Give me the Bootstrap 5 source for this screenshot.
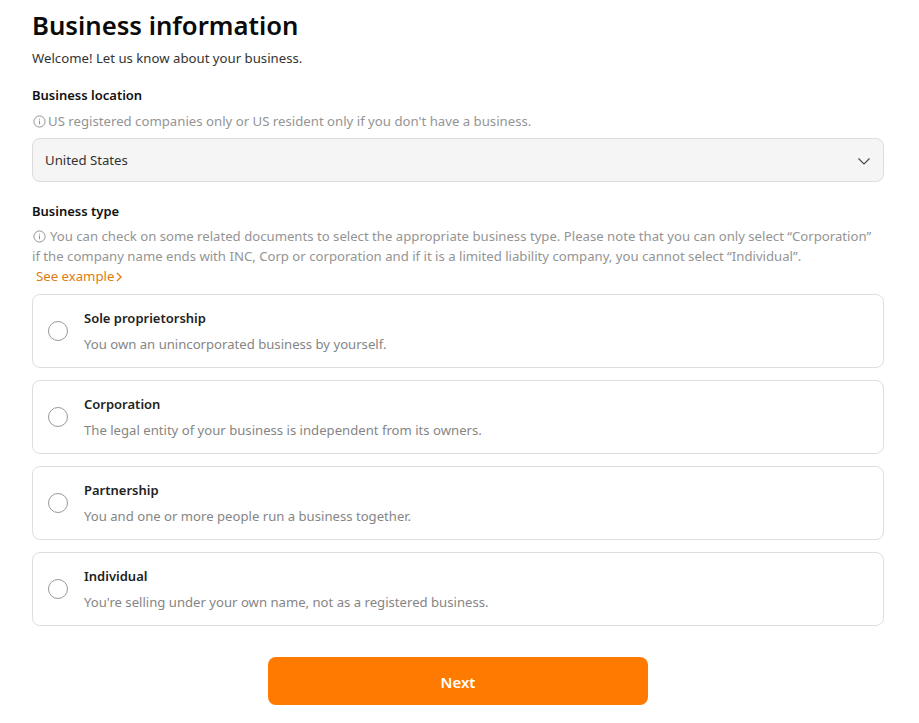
<!DOCTYPE html>
<html lang="en">
<head>
<meta charset="utf-8">
<title>Business information</title>
<link href="https://cdn.jsdelivr.net/npm/bootstrap@5.3.0/dist/css/bootstrap.min.css" rel="stylesheet">
<style>
html,body{height:723px;overflow:hidden;background:#fff;}
body{font-family:"Noto Sans","Open Sans",sans-serif;color:#111;font-size:13.2px;}
.pg{padding:0 35px 0 32px;}
.ttl{font-size:25.7px;font-weight:600;line-height:38px;margin:7px 0 0;color:#0a0a0a;}
.sub{font-size:13.2px;line-height:18px;margin:4px 0 0;color:#333;}
.lbl{font-size:13px;font-weight:600;line-height:18px;color:#111;}
.lbl1{margin-top:19px;}
.lbl2{margin-top:20px;}
.hint{font-size:13.2px;line-height:20px;color:#949494;}
.hint1{margin-top:7px;}
.hint2{margin-top:6px;font-size:13.17px;padding-right:4px;}
.ico{width:13px;height:13px;vertical-align:-2px;margin-left:1px;}
.ico1{margin-right:2px;}
.ico2{margin-right:4px;}
.sel{height:44px;background:#f5f5f5;border:1px solid #dcdcdc;border-radius:8px;padding:1px 12px 0;color:#333;font-size:13.2px;margin-top:7px;}
.opts{gap:12px;margin-top:8px;}
.opt{height:74px;border:1px solid #dedede;border-radius:8px;padding:0 15px;gap:16px;}
.rad{width:20px;height:20px;border:1.5px solid #999;border-radius:50%;flex:none;margin-top:-1px;}
.optt{font-size:13px;font-weight:600;line-height:18px;color:#222;}
.optd{font-size:13.13px;line-height:18px;color:#858585;margin-top:8px;}
.seeex{color:#e07b10;font-size:13.2px;line-height:20px;padding-left:4px;}
.seeex svg{margin-left:1px;}
.nxtw{margin-top:31px;}
.nxt{width:380px;height:48px;background:#ff7a00;border:0;border-radius:8px;color:#fff;font-weight:600;font-size:15px;padding:8px 12px 6px;}
</style>
</head>
<body>
<div class="pg">
<h1 class="ttl">Business information</h1>
<p class="sub">Welcome! Let us know about your business.</p>
<div class="lbl lbl1">Business location</div>
<div class="hint hint1"><svg class="ico ico1" viewBox="0 0 14 14" fill="none" stroke="#8a8a8a"><circle cx="7" cy="7" r="6"/><path d="M7 6v4M7 4v1"/></svg>US registered companies only or US resident only if you don't have a business.</div>
<div class="sel d-flex align-items-center justify-content-between"><span>United States</span><svg width="14" height="14" viewBox="0 0 14 14" fill="none" stroke="#444" stroke-width="1.1"><path d="M1.5 4.5 7 10l5.5-5.5"/></svg></div>
<div class="lbl lbl2">Business type</div>
<div class="hint hint2"><svg class="ico ico2" viewBox="0 0 14 14" fill="none" stroke="#8a8a8a"><circle cx="7" cy="7" r="6"/><path d="M7 6v4M7 4v1"/></svg>You can check on some related documents to select the appropriate business type. Please note that you can only select “Corporation” if the company name ends with INC, Corp or corporation and if it is a limited liability company, you cannot select “Individual”.</div>
<div class="seeex">See example<svg width="8" height="10" viewBox="0 0 8 10" fill="none" stroke="#e07b10" stroke-width="1.3"><path d="M2 1l4 4-4 4"/></svg></div>
<div class="opts d-flex flex-column">
<div class="opt d-flex align-items-center"><span class="rad"></span><div><div class="optt">Sole proprietorship</div><div class="optd">You own an unincorporated business by yourself.</div></div></div>
<div class="opt d-flex align-items-center"><span class="rad"></span><div><div class="optt">Corporation</div><div class="optd">The legal entity of your business is independent from its owners.</div></div></div>
<div class="opt d-flex align-items-center"><span class="rad"></span><div><div class="optt">Partnership</div><div class="optd">You and one or more people run a business together.</div></div></div>
<div class="opt d-flex align-items-center"><span class="rad"></span><div><div class="optt">Individual</div><div class="optd">You're selling under your own name, not as a registered business.</div></div></div>
</div>
<div class="nxtw d-flex justify-content-center"><button class="btn nxt">Next</button></div>
</div>
</body>
</html>
